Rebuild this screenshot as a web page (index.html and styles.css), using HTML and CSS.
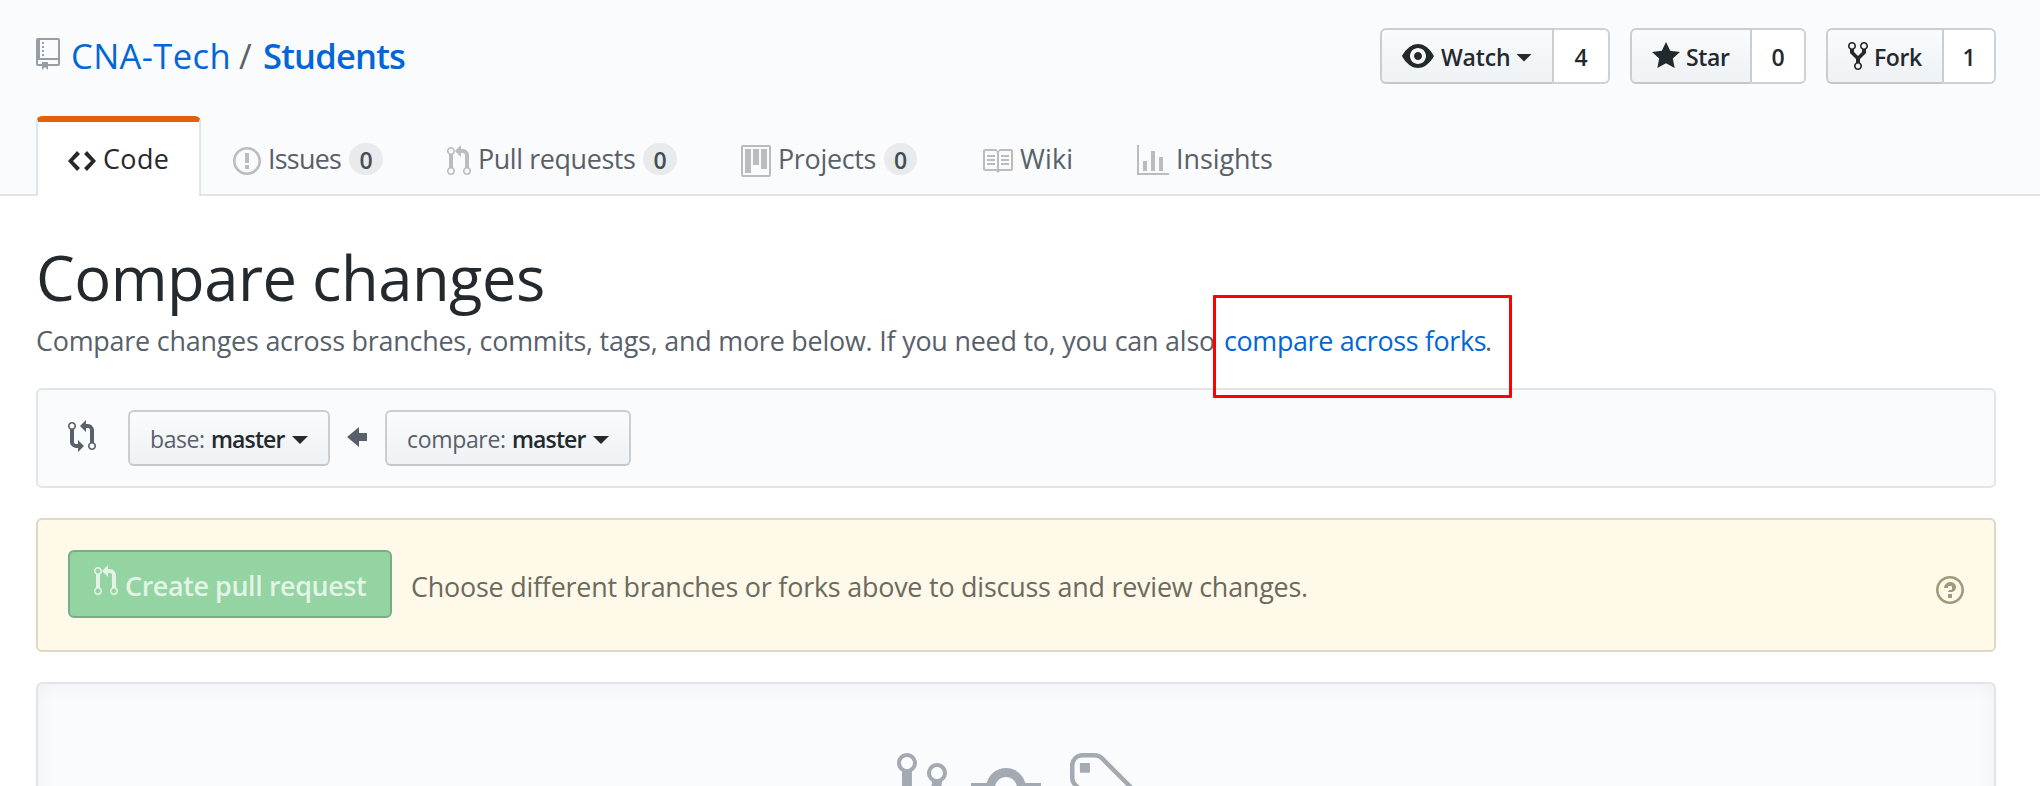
FILE: index.html
```
<!DOCTYPE html>
<html lang="en">
<head>
<meta charset="utf-8">
<title>Compare changes · CNA-Tech/Students</title>
<link rel="stylesheet" href="styles.css">
</head>
<body>
<svg width="0" height="0" class="defs">
  <symbol id="pr" viewBox="0 0 12 16"><path d="M11 11.28V5c-.03-.78-.34-1.47-.94-2.06C9.46 2.35 8.78 2.03 8 2H7V0L4 3l3 3V4h1c.27.02.48.11.69.31.21.2.3.42.31.69v6.28A1.993 1.993 0 0 0 10 15a1.993 1.993 0 0 0 1-3.72zm-1 2.92c-.66 0-1.2-.55-1.2-1.2 0-.65.55-1.2 1.2-1.2.65 0 1.2.55 1.2 1.2 0 .65-.55 1.2-1.2 1.2zM4 3c0-1.11-.89-2-2-2a1.993 1.993 0 0 0-1 3.72v6.56A1.993 1.993 0 0 0 2 15a1.993 1.993 0 0 0 1-3.72V4.72c.59-.34 1-.98 1-1.72zm-.8 10c0 .66-.55 1.2-1.2 1.2-.65 0-1.2-.55-1.2-1.2 0-.65.55-1.2 1.2-1.2.65 0 1.2.55 1.2 1.2zM2 4.2C1.34 4.2.8 3.65.8 3c0-.65.55-1.2 1.2-1.2.65 0 1.2.55 1.2 1.2 0 .65-.55 1.2-1.2 1.2z"/></symbol>
</svg>
<header class="repohead">
  <div class="repohead-row">
    <h1 class="repo-title">
      <svg class="icon repo-icon" width="24" height="32" viewBox="0 0 12 16"><path fill-rule="evenodd" d="M4 9H3V8h1v1zm0-3H3v1h1V6zm0-2H3v1h1V4zm0-2H3v1h1V2zm8-1v12c0 .55-.45 1-1 1H6v2l-1.5-1.5L3 16v-2H1c-.55 0-1-.45-1-1V1c0-.55.45-1 1-1h10c.55 0 1 .45 1 1zm-1 10H1v2h2v-1h3v1h5v-2zm0-10H2v9h9V1z"/></svg>
      <a class="author">CNA-Tech</a><span class="divider">/</span><a class="name">Students</a>
    </h1>
    <div class="actions">
      <div class="btn-group watch">
        <button class="btn"><svg class="icon" width="32" height="32" viewBox="0 0 16 16"><path fill-rule="evenodd" d="M8.06 2C3 2 0 8 0 8s3 6 8.06 6C13 14 16 8 16 8s-3-6-7.94-6zM8 12c-2.2 0-4-1.78-4-4 0-2.2 1.8-4 4-4 2.22 0 4 1.8 4 4 0 2.22-1.78 4-4 4zm2-4c0 1.11-.89 2-2 2-1.11 0-2-.89-2-2 0-1.11.89-2 2-2 1.11 0 2 .89 2 2z"/></svg><span class="label">Watch</span><i class="caret"></i></button><a class="count">4</a>
      </div>
      <div class="btn-group star">
        <button class="btn"><svg class="icon" width="28" height="32" viewBox="0 0 14 16"><path d="M14 6l-4.9-.64L7 1 4.9 5.36 0 6l3.6 3.26L2.67 14 7 11.67 11.33 14l-.93-4.74L14 6z"/></svg><span class="label">Star</span></button><a class="count">0</a>
      </div>
      <div class="btn-group fork">
        <button class="btn"><svg class="icon" width="20" height="32" viewBox="0 0 10 16"><path fill-rule="evenodd" d="M8 1a1.993 1.993 0 0 0-1 3.72V6L5 8 3 6V4.72A1.993 1.993 0 0 0 2 1a1.993 1.993 0 0 0-1 3.72V6.5l3 3v1.78A1.993 1.993 0 0 0 5 15a1.993 1.993 0 0 0 1-3.72V9.5l3-3V4.72A1.993 1.993 0 0 0 8 1zM2 4.2C1.34 4.2.8 3.65.8 3c0-.65.55-1.2 1.2-1.2.65 0 1.2.55 1.2 1.2 0 .65-.55 1.2-1.2 1.2zm3 10c-.66 0-1.2-.55-1.2-1.2 0-.65.55-1.2 1.2-1.2.65 0 1.2.55 1.2 1.2 0 .65-.55 1.2-1.2 1.2zm3-10c-.66 0-1.2-.55-1.2-1.2 0-.65.55-1.2 1.2-1.2.65 0 1.2.55 1.2 1.2 0 .65-.55 1.2-1.2 1.2z"/></svg><span class="label">Fork</span></button><a class="count">1</a>
      </div>
    </div>
  </div>
  <nav class="tabs">
    <a class="tab selected"><svg class="icon" width="28" height="32" viewBox="0 0 14 16"><path d="M9.5 3L8 4.5 11.5 8 8 11.5 9.5 13 14 8 9.5 3zm-5 0L0 8l4.5 5L6 11.5 2.5 8 6 4.5 4.5 3z"/></svg><span class="text code">Code</span></a>
    <a class="tab"><svg class="icon" width="28" height="32" viewBox="0 0 14 16"><path fill-rule="evenodd" d="M7 2.3c3.14 0 5.7 2.56 5.7 5.7s-2.56 5.7-5.7 5.7A5.71 5.71 0 0 1 1.3 8c0-3.14 2.56-5.7 5.7-5.7zM7 1C3.14 1 0 4.14 0 8s3.14 7 7 7 7-3.14 7-7-3.14-7-7-7zm1 3H6v5h2V4zm0 6H6v2h2v-2z"/></svg><span class="text issues">Issues</span><span class="counter">0</span></a>
    <a class="tab"><svg class="icon" width="24" height="32"><use href="#pr"/></svg><span class="text pulls">Pull requests</span><span class="counter">0</span></a>
    <a class="tab"><svg class="icon" width="30" height="32" viewBox="0 0 15 16"><path fill-rule="evenodd" d="M10 12h3V2h-3v10zm-4-2h3V2H6v8zm-4 4h3V2H2v12zm-1 1h13V1H1v14zM14 0H1a1 1 0 0 0-1 1v14a1 1 0 0 0 1 1h13a1 1 0 0 0 1-1V1a1 1 0 0 0-1-1z"/></svg><span class="text projects">Projects</span><span class="counter">0</span></a>
    <a class="tab"><svg class="icon" width="32" height="32" viewBox="0 0 16 16"><path fill-rule="evenodd" d="M3 5h4v1H3V5zm0 3h4V7H3v1zm0 2h4V9H3v1zm11-5h-4v1h4V5zm0 2h-4v1h4V7zm0 2h-4v1h4V9zm2-6v9c0 .55-.45 1-1 1H9.5l-1 1-1-1H2c-.55 0-1-.45-1-1V3c0-.55.45-1 1-1h5.5l1 1 1-1H15c.55 0 1 .45 1 1zm-8 .5L7.5 3H2v9h6V3.5zm7-.5H9.5l-.5.5V12h6V3z"/></svg><span class="text wiki">Wiki</span></a>
    <a class="tab"><svg class="icon" width="32" height="32" viewBox="0 0 16 16"><path d="M16 14v1H0V0h1v14h15zM5 13H3V8h2v5zm4 0H7V3h2v10zm4 0h-2V6h2v7z"/></svg><span class="text insights">Insights</span></a>
  </nav>
</header>
<main class="content">
  <h2 class="heading">Compare changes</h2>
  <p class="lead"><span class="lead-text">Compare changes across branches, commits, tags, and more below. If you need to, you can also</span><span class="fork-link"><a>compare across forks</a><i class="highlight"></i></span><span>.</span></p>
  <div class="range">
    <svg class="icon" width="28" height="32" viewBox="0 0 14 16"><path fill-rule="evenodd" d="M5 12H4c-.27-.02-.48-.11-.69-.31-.21-.2-.3-.42-.31-.69V4.72A1.993 1.993 0 0 0 2 1a1.993 1.993 0 0 0-1 3.72V11c.03.78.34 1.47.94 2.06.6.59 1.28.91 2.06.94h1v2l3-3-3-3v2zM2 1.8c.66 0 1.2.55 1.2 1.2 0 .65-.55 1.2-1.2 1.2C1.35 4.2.8 3.65.8 3c0-.65.55-1.2 1.2-1.2zm11 9.48V5c-.03-.78-.34-1.47-.94-2.06-.6-.59-1.28-.91-2.06-.94H9V0L6 3l3 3V4h1c.27.02.48.11.69.31.21.2.3.42.31.69v6.28A1.993 1.993 0 0 0 12 15a1.993 1.993 0 0 0 1-3.72zm-1 2.92c-.66 0-1.2-.55-1.2-1.2 0-.65.55-1.2 1.2-1.2.65 0 1.2.55 1.2 1.2 0 .65-.55 1.2-1.2 1.2z"/></svg>
    <button class="btn base"><span class="kind">base:</span><span class="branch">master</span><i class="caret"></i></button>
    <svg class="icon arrow" width="20" height="32" viewBox="0 0 10 16"><path d="M6 3L0 8l6 5v-3h4V6H6V3z"/></svg>
    <button class="btn compare"><span class="kind">compare:</span><span class="branch">master</span><i class="caret"></i></button>
  </div>
  <div class="notice">
    <button class="btn-primary"><svg class="icon" width="24" height="32"><use href="#pr"/></svg><span>Create pull request</span></button>
    <span class="notice-text">Choose different branches or forks above to discuss and review changes.</span>
    <svg class="icon help" width="28" height="32" viewBox="0 0 14 16"><path fill-rule="evenodd" d="M6 10h2v2H6v-2zm4-3.5C10 8.64 8 9 8 9H6c0-.55.45-1 1-1h.5c.28 0 .5-.22.5-.5v-1c0-.28-.22-.5-.5-.5h-1c-.28 0-.5.22-.5.5V7H4c0-1.5 1.5-3 3-3s3 1 3 2.5zM7 2.3c3.14 0 5.7 2.56 5.7 5.7s-2.56 5.7-5.7 5.7A5.71 5.71 0 0 1 1.3 8c0-3.14 2.56-5.7 5.7-5.7zM7 1C3.14 1 0 4.14 0 8s3.14 7 7 7 7-3.14 7-7-3.14-7-7-7z"/></svg>
  </div>
  <div class="blankslate">
    <svg class="icon" width="50" height="80" viewBox="0 0 10 16"><path fill-rule="evenodd" d="M10 5c0-1.11-.89-2-2-2a1.993 1.993 0 0 0-1 3.72v.3c-.02.52-.23.98-.63 1.38-.4.4-.86.61-1.38.63-.83.02-1.48.16-2 .45V4.72a1.993 1.993 0 0 0-1-3.72C.88 1 0 1.89 0 3a2 2 0 0 0 1 1.72v6.56c-.59.35-1 .99-1 1.72 0 1.11.89 2 2 2 1.11 0 2-.89 2-2 0-.53-.2-1-.53-1.36.09-.06.48-.41.59-.47.25-.11.56-.17.94-.17 1.05-.05 1.95-.45 2.75-1.25S8.95 7.77 9 6.73h-.02C9.59 6.37 10 5.73 10 5zM2 1.8c.66 0 1.2.55 1.2 1.2 0 .65-.55 1.2-1.2 1.2C1.35 4.2.8 3.65.8 3c0-.65.55-1.2 1.2-1.2zm0 12.41c-.66 0-1.2-.55-1.2-1.2 0-.65.55-1.2 1.2-1.2.65 0 1.2.55 1.2 1.2 0 .65-.55 1.2-1.2 1.2zm6-8c-.66 0-1.2-.55-1.2-1.2 0-.65.55-1.2 1.2-1.2.65 0 1.2.55 1.2 1.2 0 .65-.55 1.2-1.2 1.2z"/></svg>
    <svg class="icon" width="70" height="80" viewBox="0 0 14 16"><path fill-rule="evenodd" d="M10.86 7c-.45-1.72-2-3-3.86-3-1.86 0-3.41 1.28-3.86 3H0v2h3.14c.45 1.72 2 3 3.86 3 1.86 0 3.41-1.28 3.86-3H14V7h-3.14zM7 10.2c-1.22 0-2.2-.98-2.2-2.2 0-1.22.98-2.2 2.2-2.2 1.22 0 2.2.98 2.2 2.2 0 1.22-.98 2.2-2.2 2.2z"/></svg>
    <svg class="icon" width="70" height="80" viewBox="0 0 14 16"><path fill-rule="evenodd" d="M7.685 1.72a2.49 2.49 0 0 0-1.76-.726H3.48A2.5 2.5 0 0 0 .994 3.48v2.456c0 .656.269 1.292.726 1.76l6.024 6.024a.99.99 0 0 0 1.402 0l4.563-4.563a.99.99 0 0 0 0-1.402L7.685 1.72zM2.366 7.048a1.54 1.54 0 0 1-.467-1.123V3.48c0-.874.716-1.58 1.58-1.58h2.456c.418 0 .825.159 1.123.467l6.104 6.094-4.702 4.702-6.094-6.114zm.626-4.066h1.989v1.989H2.982V2.982h.01z"/></svg>
  </div>
</main>
</body>
</html>
```
FILE: styles.css
```
* { box-sizing: border-box; }
html, body { height: 100%; overflow: hidden; }
body {
  margin: 0;
  background: #fff;
  color: #24292e;
  font-family: "Open Sans", "Noto Sans", sans-serif;
  font-size: 26.88px;
  white-space: nowrap;
}
h1, h2, p { margin: 0; font-weight: 400; }
.defs { display: block; }
.icon { display: block; flex: none; fill: currentColor; }
a { color: #0366d6; }
button { font: inherit; color: inherit; margin: 0; padding: 0; text-align: left; }

/* Repository header */
.repohead { height: 196px; background: #fafbfc; border-bottom: 2px solid #e1e4e8; }
.repohead-row {
  display: flex;
  justify-content: space-between;
  height: 116px;
  padding: 28px 44px 0 36px;
}
.repo-title {
  display: flex;
  align-items: center;
  height: 56px;
  font-size: 34.56px;
  line-height: 56px;
}
.repo-icon { color: #959da5; margin: -4px 11px 0 0; }
.author { width: 168px; letter-spacing: .4px; }
.divider { width: 24px; color: #586069; }
.name { font-weight: 600; letter-spacing: -.8px; }

.actions { display: flex; gap: 20px; font-size: 23.04px; font-weight: 600; }
.btn-group { display: flex; height: 56px; }
.btn {
  display: flex;
  align-items: center;
  justify-content: flex-start;
  height: 56px;
  padding: 0 20px;
  border: 2px solid #cbced1;
  border-bottom-color: #c5c8cb;
  border-radius: 6px;
  background: linear-gradient(#fafbfc, #eff3f6 90%);
  letter-spacing: -.38px;
}
.btn-group .btn { border-radius: 6px 0 0 6px; }
.btn span { flex: none; }
.btn-group .label { padding-top: 1px; }
.count {
  flex: 1;
  height: 56px;
  padding-top: 1px;
  border: 2px solid #cfd1d3;
  border-left: 0;
  border-radius: 0 6px 6px 0;
  background: #fff;
  color: #24292e;
  line-height: 52px;
  text-align: center;
}
.caret {
  flex: none;
  width: 16px;
  height: 8px;
  margin-top: 3px;
  background: #24292e;
  clip-path: polygon(0 0, 100% 0, 50% 100%);
}
.watch { width: 230px; }
.watch .btn { width: 174px; }
.watch .label { width: 75px; margin-left: 7px; letter-spacing: -.17px; }
.star { width: 176px; }
.star .btn { width: 122px; }
.star .label { margin-left: 6px; }
.fork { width: 170px; }
.fork .btn { width: 118px; }
.fork .label { margin-left: 6px; letter-spacing: -.42px; }

/* Tabs */
.tabs { display: flex; gap: 64px; height: 80px; padding-left: 36px; }
.tab {
  display: flex;
  align-items: center;
  height: 80px;
  padding-top: 6px;
  color: #586069;
  line-height: 40px;
}
.tab .icon { margin-top: 4px; color: #bbbcbe; }
.tab.selected {
  width: 165px;
  margin-right: -32px;
  padding: 0 0 0 30px;
  border: 2px solid #e1e4e8;
  border-top: 6px solid #e36209;
  border-bottom: 0;
  border-radius: 6px 6px 0 0;
  background: #fff;
  color: #24292e;
}
.tab.selected .icon { color: #24292e; }
.text { margin-left: 7px; }
.code { letter-spacing: .4px; }
.issues { width: 81px; letter-spacing: -.74px; }
.pulls { width: 165px; letter-spacing: -.39px; }
.projects { width: 106px; margin-left: 7px; letter-spacing: -.3px; }
.wiki { width: 53px; margin-left: 7px; letter-spacing: .2px; }
.insights { letter-spacing: -.05px; }
.counter {
  width: 33px;
  height: 32px;
  padding-top: 1px;
  border-radius: 16px;
  background: #e8eaeb;
  color: #444d56;
  font-size: 23.04px;
  font-weight: 600;
  line-height: 32px;
  text-align: center;
}
.issues + .counter { width: 34px; }
.pulls + .counter { width: 34px; }

/* Page body */
.content { padding: 36px 44px 0 36px; }
.heading { font-size: 61.44px; line-height: 90px; letter-spacing: -.47px; }
.lead {
  display: flex;
  height: 38px;
  margin-bottom: 28px;
  color: #586069;
  line-height: 38px;
}
.lead-text { width: 1187px; letter-spacing: -.204px; }
.fork-link { position: relative; width: 262px; padding-left: 1px; letter-spacing: -.34px; }
.highlight {
  position: absolute;
  left: -10px;
  top: -27px;
  width: 299px;
  height: 103px;
  border: 3px solid #f00;
  border-radius: 1px;
}
.range {
  display: flex;
  align-items: center;
  height: 100px;
  margin-bottom: 30px;
  padding-left: 30px;
  border: 2px solid #e1e4e8;
  border-radius: 6px;
  background: #fafbfc;
  color: #586069;
  font-size: 23.04px;
}
.range > .icon { margin-top: -4px; }
.range > .arrow { margin: -2px 18px 0 17px; }
.range .caret { margin-top: 4px; }
.kind, .branch { padding-top: 1px; }
.branch { width: 81px; color: #24292e; font-weight: 600; letter-spacing: -.885px; }
.base { width: 202px; margin-left: 32px; }
.base .kind { width: 61px; letter-spacing: -.45px; }
.compare { width: 246px; }
.compare .kind { width: 105px; letter-spacing: -.35px; }

.notice {
  display: flex;
  align-items: center;
  height: 134px;
  margin-bottom: 30px;
  padding: 0 30px;
  border: 2px solid #dfd8c2;
  border-radius: 6px;
  background: #fff9ea;
  color: #6b6a5d;
}
.btn-primary {
  display: flex;
  align-items: center;
  width: 324px;
  height: 68px;
  margin: -2px 19px 0 0;
  padding-left: 24px;
  border: 2px solid #79ad85;
  border-radius: 6px;
  background: #94d3a2;
  color: #e3f4e6;
  font-weight: 600;
  letter-spacing: -.39px;
}
.btn-primary .icon { margin: -6px 7px 0 0; }
.btn-primary span { padding-top: 2px; }
.notice-text { padding-top: 2px; letter-spacing: -.207px; }
.help { margin: 10px 0 0 auto; color: #a09a7c; }

.blankslate {
  display: flex;
  justify-content: center;
  gap: 24px;
  height: 104px;
  padding-top: 64px;
  overflow: hidden;
  border: 2px solid #e1e4e8;
  border-bottom: 0;
  border-radius: 6px 6px 0 0;
  background: #fafbfc;
  box-shadow: inset 0 20px 20px -20px rgba(27, 31, 35, .05), inset 20px 0 20px -20px rgba(27, 31, 35, .05), inset -20px 0 20px -20px rgba(27, 31, 35, .05);
  color: #a3aab1;
}
```
